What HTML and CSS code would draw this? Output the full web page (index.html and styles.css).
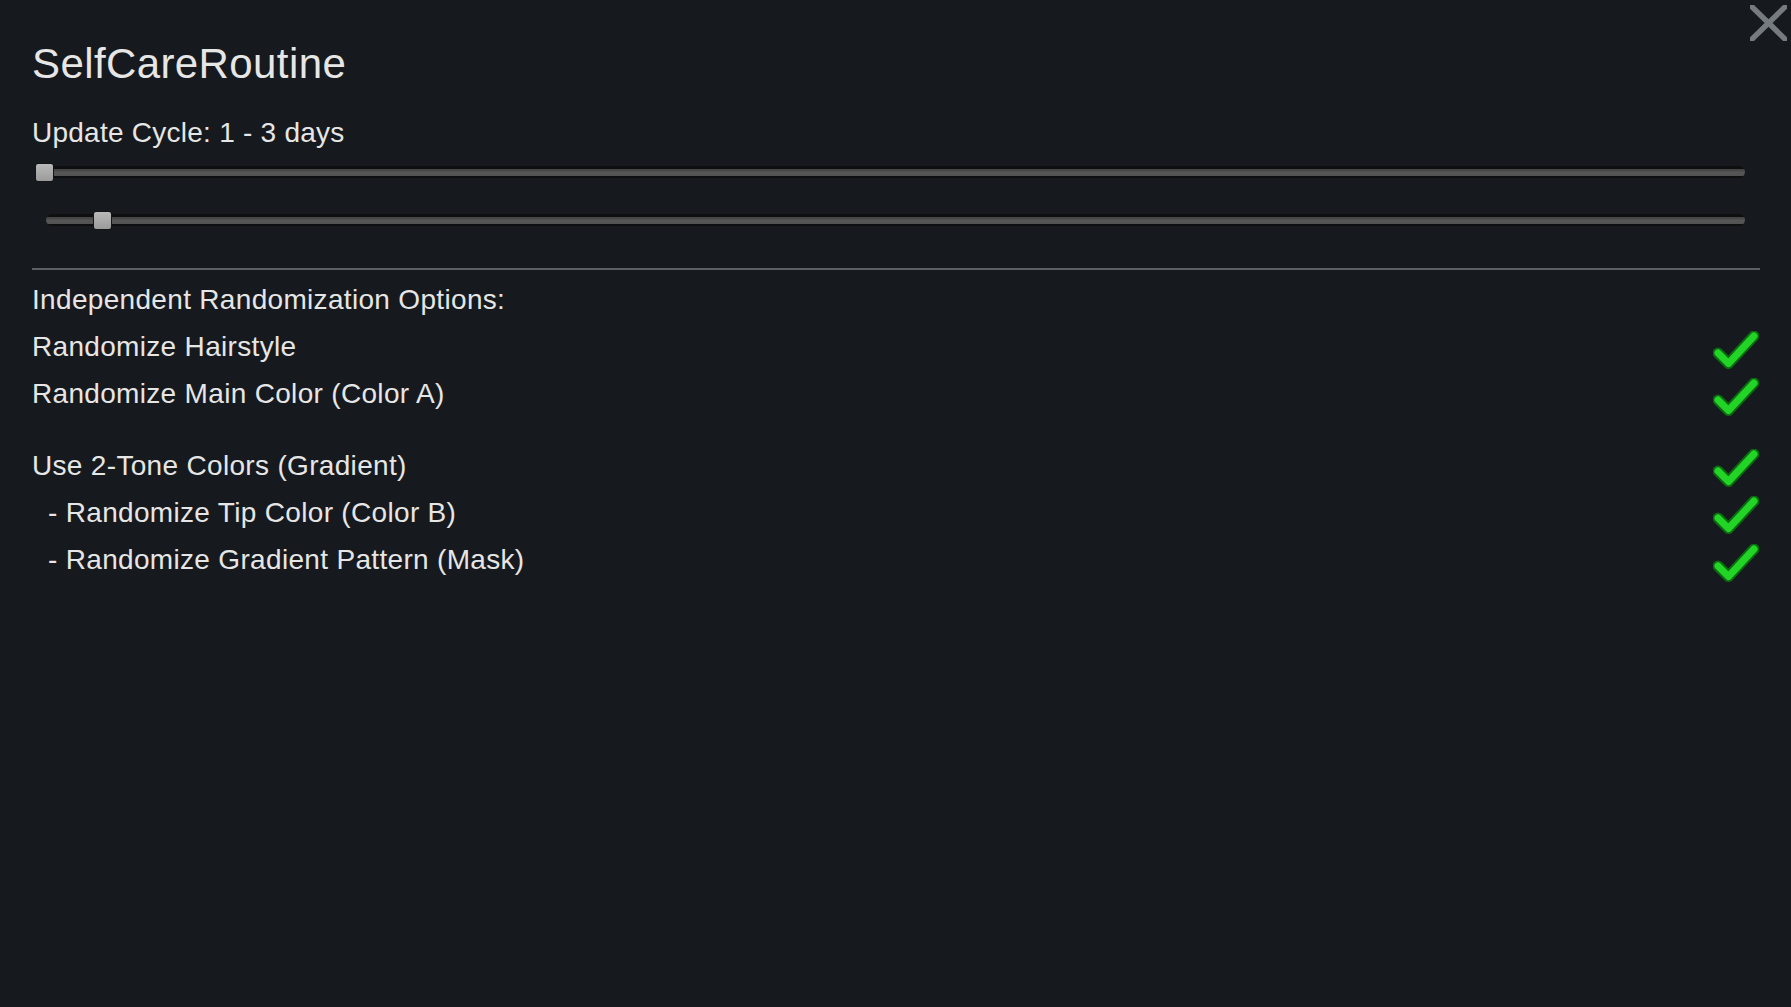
FILE: index.html
```html
<!DOCTYPE html>
<html>
<head>
<meta charset="utf-8">
<title>SelfCareRoutine</title>
<link rel="stylesheet" href="styles.css">
</head>
<body>
<div class="panel">
  <button class="close" aria-label="Close">
    <svg width="37" height="36" viewBox="0 0 37 36"><line x1="0" y1="0" x2="37" y2="36"/><line x1="37" y1="0" x2="0" y2="36"/></svg>
  </button>
  <h1 class="title">SelfCareRoutine</h1>
  <div class="label">Update Cycle: 1 - 3 days</div>
  <div class="slider slider-min">
    <div class="track"></div>
    <div class="thumb" style="left:0px"></div>
  </div>
  <div class="slider slider-max">
    <div class="track"></div>
    <div class="thumb" style="left:47px"></div>
  </div>
  <div class="separator"></div>
  <div class="option"><span>Independent Randomization Options:</span></div>
  <div class="option"><span>Randomize Hairstyle</span><svg class="check" width="46" height="40" viewBox="0 0 46 40"><path class="c-out" d="M5 22 L15.5 32.5 L41 5"/><path class="c-in" d="M5 22 L15.5 32.5 L41 5"/></svg></div>
  <div class="option"><span>Randomize Main Color (Color A)</span><svg class="check" width="46" height="40" viewBox="0 0 46 40"><path class="c-out" d="M5 22 L15.5 32.5 L41 5"/><path class="c-in" d="M5 22 L15.5 32.5 L41 5"/></svg></div>
  <div class="option group-start"><span>Use 2-Tone Colors (Gradient)</span><svg class="check" width="46" height="40" viewBox="0 0 46 40"><path class="c-out" d="M5 22 L15.5 32.5 L41 5"/><path class="c-in" d="M5 22 L15.5 32.5 L41 5"/></svg></div>
  <div class="option sub"><span>- Randomize Tip Color (Color B)</span><svg class="check" width="46" height="40" viewBox="0 0 46 40"><path class="c-out" d="M5 22 L15.5 32.5 L41 5"/><path class="c-in" d="M5 22 L15.5 32.5 L41 5"/></svg></div>
  <div class="option sub"><span>- Randomize Gradient Pattern (Mask)</span><svg class="check" width="46" height="40" viewBox="0 0 46 40"><path class="c-out" d="M5 22 L15.5 32.5 L41 5"/><path class="c-in" d="M5 22 L15.5 32.5 L41 5"/></svg></div>
</div>
</body>
</html>
```
FILE: styles.css
```css
html, body {
  margin: 0;
  padding: 0;
  background: #16191d;
  height: 100%;
}
body {
  font-family: "Liberation Sans", Arial, sans-serif;
  color: #e6e6e6;
}
.panel {
  position: relative;
  padding: 39px 31px 0 32px;
  display: flex;
  flex-direction: column;
}
.close {
  position: absolute;
  top: 5px;
  right: 4px;
  width: 37px;
  height: 36px;
  padding: 0;
  border: 0;
  background: none;
  cursor: pointer;
}
.close svg {
  display: block;
  overflow: hidden;
}
.close line {
  stroke: #767b7f;
  stroke-width: 5.5;
}
.title {
  margin: 0 0 27px 0;
  font-size: 42px;
  font-weight: normal;
  letter-spacing: 0.4px;
  line-height: 50px;
  height: 50px;
}
.label {
  font-size: 28px;
  letter-spacing: 0.25px;
  line-height: 34px;
  height: 34px;
}
.slider {
  position: relative;
  height: 20px;
  display: flex;
  align-items: center;
}
.slider-min {
  margin: 12px 15px 0 3px;
}
.slider-max {
  margin: 28px 15px 0 14px;
}
.track {
  flex: 1;
  height: 12px;
  border-radius: 6px;
  background: linear-gradient(to bottom, #0e0f11 0, #0e0f11 2.5px, #434343 2.5px, #484848 5px, #575757 6px, #525252 9.5px, #0e0f11 9.5px, #0e0f11 12px);
}
.thumb {
  position: absolute;
  top: 0;
  width: 17px;
  height: 17px;
  margin-top: 1px;
  border: 1px solid #141516;
  border-radius: 3px;
  background: linear-gradient(to bottom, #b9b9b9, #9b9b9b);
}
.separator {
  height: 2px;
  background: #5c6064;
  margin-top: 38px;
  margin-bottom: 6px;
}
.option {
  display: flex;
  justify-content: space-between;
  align-items: center;
  height: 47.2px;
  line-height: 47.2px;
  font-size: 28px;
  letter-spacing: 0.32px;
  white-space: pre;
}
.option.group-start {
  margin-top: 24px;
}
.option.sub {
  padding-left: 16px;
}
.check {
  display: block;
  margin-top: 8px;
  margin-right: 1px;
}
.c-out {
  fill: none;
  stroke: #0b6a10;
  stroke-width: 11;
  stroke-linecap: round;
  stroke-linejoin: round;
}
.c-in {
  fill: none;
  stroke: #22d425;
  stroke-width: 7;
  stroke-linecap: round;
  stroke-linejoin: round;
}
```
